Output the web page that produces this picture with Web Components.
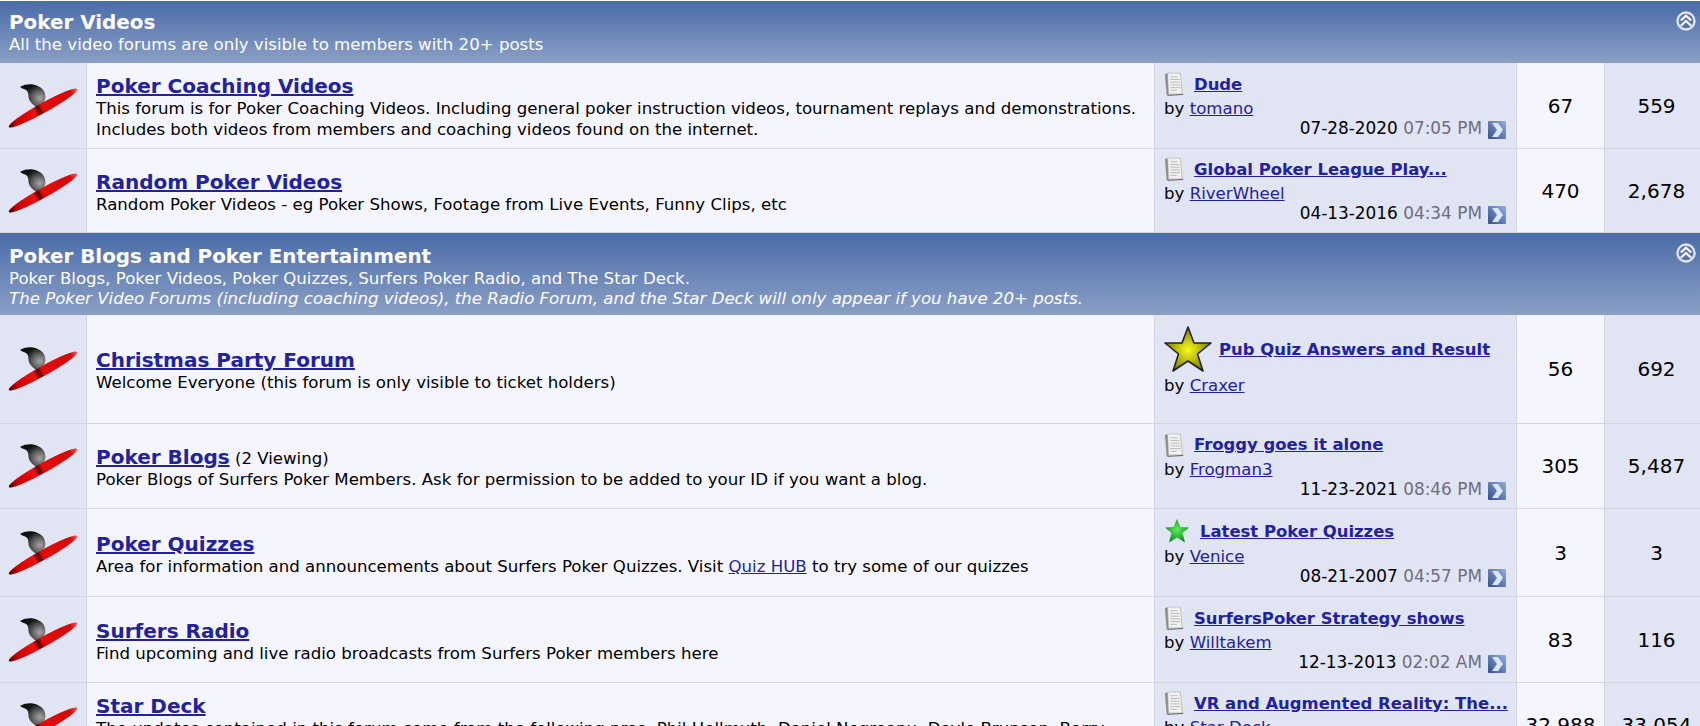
<!DOCTYPE html>
<html>
<head>
<meta charset="utf-8">
<title>Forums</title>
<style>
    html, body { margin: 0; height: 726px; overflow: hidden; background: #fff; }
    body { font: 16.6px "DejaVu Sans", Verdana, sans-serif; color: #000; padding-top: 1px; box-sizing: border-box; }
</style>
</head>
<body>
<forum-category title-text="Poker Videos">
    <span slot="desc">All the video forums are only visible to members with 20+ posts</span>
    <forum-row name="Poker Coaching Videos" threads="67" posts="559" height="86">
        This forum is for Poker Coaching Videos. Including general poker instruction videos, tournament replays and demonstrations. Includes both videos from members and coaching videos found on the internet.
        <last-post slot="last" title-text="Dude" by="tomano" date="07-28-2020" time="07:05 PM"></last-post>
    </forum-row>
    <forum-row name="Random Poker Videos" threads="470" posts="2,678" height="84">
        Random Poker Videos - eg Poker Shows, Footage from Live Events, Funny Clips, etc
        <last-post slot="last" title-text="Global Poker League Play..." by="RiverWheel" date="04-13-2016" time="04:34 PM"></last-post>
    </forum-row>
</forum-category>
<forum-category title-text="Poker Blogs and Poker Entertainment" style="--head-top: 12px; --head-bottom: 6px">
    <span slot="desc">Poker Blogs, Poker Videos, Poker Quizzes, Surfers Poker Radio, and The Star Deck.<br><i>The Poker Video Forums (including coaching videos), the Radio Forum, and the Star Deck will only appear if you have 20+ posts.</i></span>
    <forum-row name="Christmas Party Forum" threads="56" posts="692" height="109">
        Welcome Everyone (this forum is only visible to ticket holders)
        <last-post slot="last" title-text="Pub Quiz Answers and Result" by="Craxer" icon="gold"></last-post>
    </forum-row>
    <forum-row name="Poker Blogs" viewing="(2 Viewing)" threads="305" posts="5,487" height="85">
        Poker Blogs of Surfers Poker Members. Ask for permission to be added to your ID if you want a blog.
        <last-post slot="last" title-text="Froggy goes it alone" by="Frogman3" date="11-23-2021" time="08:46 PM"></last-post>
    </forum-row>
    <forum-row name="Poker Quizzes" threads="3" posts="3" height="88">
        Area for information and announcements about Surfers Poker Quizzes. Visit <a href="#">Quiz HUB</a> to try some of our quizzes
        <last-post slot="last" title-text="Latest Poker Quizzes" by="Venice" date="08-21-2007" time="04:57 PM" icon="green"></last-post>
    </forum-row>
    <forum-row name="Surfers Radio" threads="83" posts="116" height="86">
        Find upcoming and live radio broadcasts from Surfers Poker members here
        <last-post slot="last" title-text="SurfersPoker Strategy shows" by="Willtakem" date="12-13-2013" time="02:02 AM"></last-post>
    </forum-row>
    <forum-row name="Star Deck" threads="32,988" posts="33,054" height="84" style="--info-pad: 4px">
        The updates contained in this forum come from the following pros: Phil Hellmuth, Daniel Negreanu, Doyle Brunson, Barry Greenstein, Erick Lindgren and others.
        <last-post slot="last" title-text="VR and Augmented Reality: The..." by="Star Deck" date="01-01-2020" time="12:00 PM"></last-post>
    </forum-row>
</forum-category>

<script>
const ICONS = {
    doc: `<svg width="20" height="24" viewBox="0 0 22 26">
        <path d="M1 2 L6 1 L6 24 L3 26 Z" fill="#8b8b8b"/>
        <path d="M4 1 L18 1 L20 22 L21 24 L5 24 Z" fill="#f1f1ee" stroke="#a9a9a9" stroke-width=".7"/>
        <path d="M7 5H15M7 8H17M7 11H17M7 14H18M7 17H18M7 20H14" stroke="#b5b5b5" stroke-width="1"/>
        <path d="M4 25.500 L21 24.500" stroke="#555" stroke-width="1"/>
    </svg>`,
    gold: `<svg width="48" height="46" viewBox="0 0 48 46" style="margin-right:-3px;margin-bottom:1px">
        <defs><radialGradient id="gs" cx=".5" cy=".52" r=".5"><stop offset="0" stop-color="#fbfb20"/><stop offset="1" stop-color="#7d7d00"/></radialGradient></defs>
        <path d="M24 1 L30 17 L47 17 L33.500 28 L39 45 L24 35 L9 45 L14.500 28 L1 17 L18 17 Z" fill="url(#gs)" stroke="#222" stroke-width="1.6" stroke-linejoin="round"/>
    </svg>`,
    green: `<svg width="26" height="26" viewBox="0 0 26 26">
        <defs><radialGradient id="ge" cx=".5" cy=".45" r=".55"><stop offset="0" stop-color="#5df05d"/><stop offset="1" stop-color="#0e8a1e"/></radialGradient></defs>
        <path d="M13 1 L16.500 9 L25 9.500 L18.500 15 L21 24.500 L13 19.500 L5 24.500 L7.500 15 L1 9.500 L9.500 9 Z" fill="url(#ge)"/>
    </svg>`
};

class SiteLogo extends HTMLElement {
    constructor() {
        super();
        this.attachShadow({ mode: 'open' });
    }

    connectedCallback() {
        const id = 'g' + Math.random().toString(36).slice(2);
        this.shadowRoot.innerHTML = `
            <style>
                :host { display: block; width: 70px; height: 46px; }
                svg { display: block; }
            </style>
            <svg width="70" height="46" viewBox="0 0 70 46">
                <defs>
                    <radialGradient id="${id}h" cx=".78" cy=".6" r=".7"><stop offset="0" stop-color="#a4a4a4"/><stop offset=".45" stop-color="#5c5c5c"/><stop offset=".85" stop-color="#111"/></radialGradient>
                    <linearGradient id="${id}b"><stop offset="0" stop-color="#400"/><stop offset=".12" stop-color="#c00"/><stop offset=".38" stop-color="#f01010"/><stop offset=".44" stop-color="#500"/><stop offset=".5" stop-color="#e80c0c"/><stop offset=".9" stop-color="#d40808"/><stop offset="1" stop-color="#f55"/></linearGradient>
                </defs>
                <path d="M12 4 C16 1.500 21 1 25 1.500 C31 2.500 36 6 37 11 C38 15 37 18 35 20 C34 23 32 25 30 24.500 C26 23 21 19 20.500 14 C20.500 11 20 8 18 7 C16 6 14 5.500 12 4 Z" fill="url(#${id}h)"/>
                <ellipse cx="35" cy="25" rx="39" ry="5" transform="rotate(-29 35 25)" fill="url(#${id}b)"/>
            </svg>
        `;
    }
}

class LastPost extends HTMLElement {
    constructor() {
        super();
        this.attachShadow({ mode: 'open' });
    }

    connectedCallback() {
        const a = n => this.getAttribute(n) || '';
        const icon = a('icon');
        const date = a('date');
        this.shadowRoot.innerHTML = `
            <style>
                :host { display: block; line-height: 21px; }
                a { color: #22229c; }
                .head { display: flex; align-items: center; gap: 10px; margin-bottom: 2px; }
                .head svg { display: block; flex: none; }
                .title { font-weight: bold; font-size: 16.45px; white-space: nowrap; }
                .when { display: flex; justify-content: flex-end; align-items: center; gap: 6px; height: 21px; margin-top: -1px; font-size: 16.9px; }
                .when:empty { height: 17px; }
                .time { color: #6e6e80; }
                .go { display: block; width: 18px; height: 18px; margin-top: 3px; flex: none; }
            </style>
            <div class="head">${ICONS[icon || 'doc']}<a class="title" href="#">${a('title-text')}</a></div>
            <div class="by">by <a href="#">${a('by')}</a></div>
            <div class="when">${date ? `<span>${date} <span class="time">${a('time')}</span></span>
                <svg class="go" viewBox="0 0 18 18">
                    <defs><linearGradient id="lg" x1="0" y1="1" x2="1" y2="0"><stop offset="0" stop-color="#34508f"/><stop offset="1" stop-color="#92acdc"/></linearGradient></defs>
                    <rect width="18" height="18" rx="1" fill="url(#lg)"/>
                    <path d="M4 2 H10 L15 9 L10 16 H4 L9 9 Z" fill="#dde6f8"/>
                </svg>` : ''}</div>
        `;
    }
}

class ForumRow extends HTMLElement {
    constructor() {
        super();
        this.attachShadow({ mode: 'open' });
    }

    connectedCallback() {
        const a = n => this.getAttribute(n) || '';
        const viewing = a('viewing');
        this.shadowRoot.innerHTML = `
            <style>
                :host {
                    display: grid;
                    grid-template-columns: 86px 1fr 362px 88px 96px;
                    height: ${a('height')}px;
                    box-sizing: border-box;
                    border-bottom: 1px solid #d1d5e0;
                }
                .cell { border-left: 1px solid #d1d5e0; padding: 0 8px; background: #f5f5ff; display: flex; flex-direction: column; justify-content: center; min-width: 0; }
                .cell.alt { background: #e1e4f2; }
                .cell.icon { border-left: 0; padding: 0 0 0 8px; }
                .info { line-height: 21px; padding: var(--info-pad, 3px) 8px 0 9px; box-sizing: border-box; }
                .last { padding: 0 10px 0 9px; }
                .name { font-size: 20px; font-weight: bold; color: #22229c; line-height: 24px; }
                .stat { align-items: center; font-size: 20px; padding: 0; }
                .stat:last-child { padding-left: 8px; }
                ::slotted(a) { color: #22229c; }
            </style>
            <div class="cell alt icon"><site-logo></site-logo></div>
            <div class="cell info">
                <div><a class="name" href="#">${a('name')}</a>${viewing ? ` <span>${viewing}</span>` : ''}</div>
                <div><slot></slot></div>
            </div>
            <div class="cell alt last"><slot name="last"></slot></div>
            <div class="cell stat">${a('threads')}</div>
            <div class="cell alt stat">${a('posts')}</div>
        `;
    }
}

class ForumCategory extends HTMLElement {
    constructor() {
        super();
        this.attachShadow({ mode: 'open' });
    }

    connectedCallback() {
        this.shadowRoot.innerHTML = `
            <style>
                :host { display: block; }
                header {
                    position: relative;
                    background: linear-gradient(#4b6ca8, #8a9fc5);
                    color: #fff;
                    padding: var(--head-top, 10px) 9px var(--head-bottom, 8px);
                    line-height: 20px;
                }
                h2 { margin: 0; font-size: 19.9px; line-height: 24px; font-weight: bold; }
                svg { position: absolute; right: 4px; top: 10px; }
            </style>
            <header>
                <h2>${this.getAttribute('title-text')}</h2>
                <slot name="desc"></slot>
                <svg width="20" height="20" viewBox="0 0 20 20">
                    <circle cx="10" cy="10" r="8.500" fill="#5474ab" stroke="#dfe6f3" stroke-width="2.400"/>
                    <path d="M4.800 9.500 L10 4.800 L15.200 9.500 M4.800 14.800 L10 10 L15.200 14.800" fill="none" stroke="#fff" stroke-width="2.200"/>
                </svg>
            </header>
            <slot></slot>
        `;
    }
}

customElements.define('site-logo', SiteLogo);
customElements.define('last-post', LastPost);
customElements.define('forum-row', ForumRow);
customElements.define('forum-category', ForumCategory);
</script>
</body>
</html>
